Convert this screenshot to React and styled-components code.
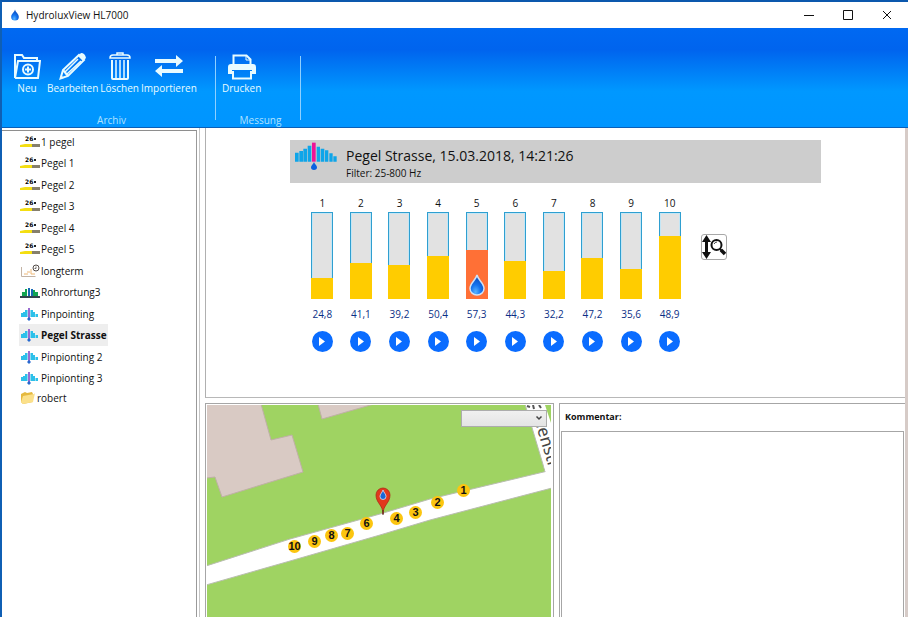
import React from 'react'
import styled, { createGlobalStyle, css } from 'styled-components'

const GlobalStyle = createGlobalStyle`
  *, *::before, *::after {
    box-sizing: border-box;
  }
  body {
    margin: 0;
    font-family: 'Open Sans', 'Noto Sans', sans-serif;
    font-size: 10px;
    color: #111;
    background: #fff;
  }
  button, select, textarea {
    font: inherit;
    color: inherit;
    margin: 0;
  }
`

const Window = styled.div`
  display: flex;
  flex-direction: column;
  min-height: 100vh;
  border-top: 2px solid #0c58ad;
  border-left: 2px solid #0f5fb4;
`

const TitleBar = styled.header`
  display: flex;
  align-items: center;
  height: 26px;
  padding: 0 2px 0 8px;
  background: #fff;
`

const Title = styled.h1`
  flex: 1;
  margin: 0 0 0 6px;
  font-size: 10px;
  font-weight: 400;
`

const WindowButton = styled.button`
  display: flex;
  align-items: center;
  justify-content: center;
  width: 39px;
  height: 24px;
  padding: 0;
  border: 0;
  background: none;
`

const Ribbon = styled.nav`
  display: flex;
  align-items: flex-start;
  height: 100px;
  padding: 24px 0 0 6px;
  color: #e8fbff;
  background: linear-gradient(#0069f2 0%, #0064ee 22%, #0098ff 64%, #0095ff 100%);
  border-bottom: 1px solid #0a5fb8;
`

const RibbonGroup = styled.section`
  display: flex;
  flex-direction: column;
  justify-content: space-between;
  align-items: center;
  height: 75px;
`

const RibbonDivider = styled.span`
  width: 1px;
  height: 64px;
  margin: 4px 5px 0 0;
  background: #8fd0ff;
`

const ToolRow = styled.div`
  display: flex;
  align-self: flex-start;
`

const Tool = styled.button`
  display: flex;
  flex-direction: column;
  align-items: center;
  justify-content: flex-end;
  min-width: 38px;
  height: 43px;
  padding: 0 1px;
  border: 0;
  background: none;
  line-height: 14px;

  svg {
    margin-bottom: 1px;
  }
`

const GroupCaption = styled.h2`
  margin: 0;
  font-size: 10px;
  font-weight: 400;
  line-height: 14px;
  color: #b0e2ff;
`

const ArchiveGroup = styled(RibbonGroup)`
  width: 207px;
`

const PrintGroup = styled(RibbonGroup)`
  width: 79px;
`

const Workspace = styled.div`
  flex: 1;
  display: flex;
  padding-right: 3px;
  background: linear-gradient(to left, #d6cbc7 3px, #fff 3px);
`

const Sidebar = styled.aside`
  width: 198px;
  padding: 2px 2px 0 0;
  border-right: 1px solid #c6c6c6;
`

const Tree = styled.ul`
  height: 100%;
  margin: 0;
  padding: 0 0 0 17px;
  list-style: none;
  border-top: 1px solid #8e8e8e;
  border-right: 1px solid #9a9a9a;
`

const TreeItem = styled.li`
  display: flex;
  height: 21px;

  &:nth-child(even) {
    height: 22px;
  }
  &:last-child {
    height: 18px;
  }
`

const TreeButton = styled.button`
  display: flex;
  align-items: center;
  gap: 1px;
  padding: 0 1px;
  border: 0;
  white-space: nowrap;
  background: ${({ $selected }) => ($selected ? '#eeeeee' : 'none')};
  font-weight: ${({ $selected }) => ($selected ? 700 : 400)};
`

const Content = styled.main`
  flex: 1;
  display: flex;
  flex-direction: column;
  gap: 5px;
  min-width: 0;
  margin-left: 5px;
`

const Measurement = styled.section`
  padding: 12px 84px 45px;
  border-left: 1px solid #b0b0b0;
  border-bottom: 1px solid #b8b8b8;
`

const MeasurementHeader = styled.div`
  display: flex;
  align-items: flex-start;
  gap: 9px;
  height: 43px;
  padding: 2px 5px;
  background: #cdcdcd;
`

const MeasurementTitle = styled.h2`
  margin: 3px 0 0;
  font-size: 14px;
  font-weight: 400;
  line-height: 22px;
`

const FilterInfo = styled.p`
  margin: 0;
  line-height: 13px;
`

const ChartRow = styled.div`
  display: flex;
  align-items: flex-start;
  padding: 12px 0 0 13px;
`

const Chart = styled.div`
  display: grid;
  grid-template-columns: repeat(10, 1fr);
  width: 386px;
`

const Channel = styled.div`
  display: flex;
  flex-direction: column;
  align-items: center;
`

const ChannelNumber = styled.span`
  line-height: 16px;
`

const Bar = styled.div`
  display: flex;
  flex-direction: column;
  justify-content: flex-end;
  width: 22px;
  height: 87px;
  margin-top: 1px;
  background: #e2e2e2;
  box-shadow: inset 0 0 0 1px #2f9fd0, inset 0 0 0 2px #c4e6f5;
`

const BarFill = styled.div`
  display: flex;
  align-items: flex-end;
  justify-content: center;
  padding-bottom: 3px;
  background: ${({ $leak }) => ($leak ? '#ff7036' : '#ffcc00')};
`

const ChannelValue = styled.span`
  margin-top: 7px;
  line-height: 16px;
  color: #0b2f86;
`

const PlayButton = styled.button`
  display: flex;
  align-items: center;
  justify-content: center;
  width: 21px;
  height: 21px;
  margin-top: 9px;
  padding: 0;
  border: 0;
  border-radius: 50%;
  background: #0a6cff;
`

const ScaleButton = styled.button`
  width: 26px;
  height: 26px;
  margin: 39px 0 0 12px;
  padding: 0;
  border: 1px solid #a8a8a8;
  border-radius: 3px;
  background: #fff;

  svg {
    display: block;
  }
`

const Lower = styled.div`
  flex: 1;
  display: flex;
  gap: 5px;
`

const pane = css`
  flex: 1;
  min-width: 0;
  border: 1px solid #a6a6a6;
  border-bottom: 0;
`

const MapPane = styled.section`
  ${pane}
  display: flex;
  padding: 1px 2px 0 1px;
`

const MapCanvas = styled.div`
  position: relative;
  flex: 1;
  overflow: hidden;
  background: #9fd362;

  > svg {
    position: absolute;
    top: 0;
    left: 0;
  }
`

const Marker = styled.button`
  position: absolute;
  left: ${({ $x }) => $x}px;
  top: ${({ $y }) => $y}px;
  display: flex;
  align-items: center;
  justify-content: center;
  width: 13px;
  height: 13px;
  margin: -7px;
  padding: 0;
  border: 0;
  border-radius: 50%;
  background: #fcc50f;
  font: bold 11px/13px 'Liberation Sans', sans-serif;
`

const LayerPicker = styled.div`
  position: absolute;
  top: 5px;
  right: 4px;

  svg {
    position: absolute;
    right: 4px;
    top: 4px;
    pointer-events: none;
  }
`

const LayerSelect = styled.select`
  display: block;
  width: 86px;
  height: 17px;
  appearance: none;
  border: 1px solid #acacac;
  border-radius: 0;
  background: linear-gradient(#f0f0f0, #e4e4e4);
`

const CommentPane = styled.section`
  ${pane}
  display: flex;
  flex-direction: column;
  padding: 0 0 0 1px;
  border-right: 0;
`

const CommentLabel = styled.label`
  padding: 4px 4px 6px;
  line-height: 17px;
  font-size: 9px;
  font-weight: 700;
`

const CommentBox = styled.textarea`
  flex: 1;
  width: auto;
  margin-right: 1px;
  padding: 4px;
  resize: none;
  outline: 0;
  background: #fff;
  border: 1px solid #a6a6a6;
  border-bottom: 0;
`

const Drop = ({ width = 8, height = 11, outline = 'none' }) => (
  <svg width={width} height={height} viewBox="0 0 16 22" aria-hidden="true">
    <defs>
      <radialGradient id="drop" cx="0.4" cy="0.85" r="0.8">
        <stop offset="0" stopColor="#58b4ff" />
        <stop offset="0.45" stopColor="#1373ee" />
        <stop offset="1" stopColor="#0846b8" />
      </radialGradient>
    </defs>
    <path
      d="M8 1C7 6 1 9 1 14.500a7 6.500 0 0 0 14 0C15 9 9 6 8 1z"
      fill="url(#drop)"
      stroke={outline}
      strokeWidth="1.500"
    />
  </svg>
)

const PinpointIcon = ({ width = 18, height = 13 }) => (
  <svg width={width} height={height} viewBox="0 0 126 84" preserveAspectRatio="none" aria-hidden="true">
    <path
      fill="#0ea5e9"
      d="M0 32h11v27H0zM13 27h11v32H13zM25 20h11v39H25zM38 11h11v48H38zM65 14h10v45H65zM77 20h11v39H77zM90 25h10v34H90zM103 34h10v25h-10zM115 43h10v16h-10z"
    />
    <path fill="#ee1297" d="M51 2h11v57H51z" />
    <path fill="#0b62e0" d="M57 60c-2 7-9 10-9 16a9 8 0 0 0 18 0c0-6-7-9-9-16z" />
  </svg>
)

const SmallPinpointIcon = () => (
  <svg width="20" height="14" viewBox="0 0 20 14" aria-hidden="true">
    <path fill="#2cc0ea" d="M1 6h2v4H1zM3 5h2v5H3zM5 3h2v7H5zM11 3h2v7h-2zM13 5h2v5h-2zM16 7h2v3h-2z" />
    <path fill="#8fdcf2" d="M7 3h1v7H7zM10 3h1v7h-1zM15 7h1v3h-1z" />
    <path fill="#9a6bd0" d="M8 1h2v10H8z" />
    <path fill="#2569cf" d="M9 10l2 2-2 2-2-2z" />
  </svg>
)

const LevelIcon = () => (
  <svg width="20" height="12" viewBox="0 0 20 12" aria-hidden="true">
    <text x="5" y="5" fontSize="6" fontWeight="700" fontFamily="DejaVu Sans, sans-serif">26</text>
    <path fill="#222" d="M14 2h2v2h-2z" />
    <path fill="#f4de12" d="M0 9l5-1h8v3H0z" />
    <path fill="#86806c" d="M12 8h8v3h-8z" />
  </svg>
)

const LongtermIcon = () => (
  <svg width="20" height="14" viewBox="0 0 20 14" fill="none" aria-hidden="true">
    <path d="M1.500 3v9.500h14" stroke="#c3b3a4" />
    <path d="M4 10h4M7 8h3M11 5v5h4" stroke="#efb877" />
    <circle cx="16" cy="4" r="3" fill="#fff" stroke="#544c48" />
    <path d="M16 2.500v2h-1.500" stroke="#544c48" strokeWidth="0.800" />
  </svg>
)

const LocateIcon = () => (
  <svg width="20" height="13" viewBox="0 0 20 13" aria-hidden="true">
    <path fill="#12a452" d="M2 6h3v4H2zM5 3h2v7H5zM13 4h2v6h-2zM15 6h3v4h-3z" />
    <path fill="#1769b5" d="M8 2h2v8H8zM11 3h2v7h-2z" />
    <path fill="#33454e" d="M0 10h20v2H0z" />
  </svg>
)

const FolderIcon = () => (
  <svg width="16" height="14" viewBox="0 0 16 14" aria-hidden="true">
    <path fill="#e5b93f" d="M1 3l4-2 2 1 5-1 1 2v8L3 13 1 11z" />
    <path fill="#fbe08a" d="M3 5l11-2 1-1-2 9-10 2-2-2z" />
  </svg>
)

const NewIcon = () => (
  <svg width="28" height="26" viewBox="0 0 28 26" fill="none" stroke="currentColor" strokeWidth="2" aria-hidden="true">
    <path d="M24 6V4H11L9 1H2v23l3-17h22l-2 17H2" />
    <circle cx="15" cy="15.500" r="5" />
    <path d="M15 12.500v6M12 15.500h6" />
  </svg>
)

const EditIcon = () => (
  <svg width="28" height="28" viewBox="0 0 28 28" fill="none" stroke="currentColor" strokeWidth="2" aria-hidden="true">
    <path d="M1.500 26.500L4 18 20 3l5 5L9 24z" />
    <path d="M6 20L19 7M8 22L22 9" strokeWidth="1.500" />
    <path fill="currentColor" d="M19 4l3-3q4 0 5 5l-3 3zM1 27l1-4 3 3z" stroke="none" />
    <path d="M4 18l5 6" />
  </svg>
)

const DeleteIcon = () => (
  <svg width="22" height="28" viewBox="0 0 22 28" fill="none" stroke="currentColor" aria-hidden="true">
    <path d="M1 6q0-3 3-3h14q3 0 3 3zM8 3V1h6v2" strokeWidth="1.500" />
    <path d="M3 8v18q0 1 1 1h14q1 0 1-1V8" strokeWidth="2" />
    <path d="M7 8v18M11 8v18M15 8v18" strokeWidth="1.500" />
  </svg>
)

const ImportIcon = () => (
  <svg width="28" height="28" viewBox="0 0 28 28" fill="currentColor" aria-hidden="true">
    <path d="M0 7h21V3l7 6-7 6v-4H0zM28 17H7v-4l-7 6 7 6v-4h21z" />
  </svg>
)

const PrintIcon = () => (
  <svg width="28" height="26" viewBox="0 0 28 26" aria-hidden="true">
    <path d="M5.500 12V1.500h13l4 4V12" fill="none" stroke="currentColor" strokeWidth="2" />
    <path d="M18 1v5h5" fill="none" stroke="currentColor" />
    <path fill="currentColor" d="M3 10h22q3 0 3 3v7h-4v-4H4v4H0v-7q0-3 3-3z" />
    <path d="M5 17v7.500h18V17" fill="none" stroke="currentColor" strokeWidth="2" />
  </svg>
)

const ScaleIcon = () => (
  <svg width="24" height="24" viewBox="0 0 24 24" fill="none" stroke="#111" aria-hidden="true">
    <path d="M4.500 5v14" strokeWidth="3" />
    <path d="M4.500 0L9 7H0zM4.500 24L9 17H0z" fill="#111" stroke="none" />
    <circle cx="14.500" cy="10" r="5" strokeWidth="2" />
    <path d="M18 14l1.500 1.500" strokeWidth="2" />
    <path d="M19 15l4 4" strokeWidth="3.500" />
    <path d="M12 9q1-2 3-2" strokeWidth="0.800" />
  </svg>
)

const treeIcons = {
  level: LevelIcon,
  longterm: LongtermIcon,
  locate: LocateIcon,
  pinpoint: SmallPinpointIcon,
  folder: FolderIcon,
}

const archive = [
  { name: '1 pegel', icon: 'level' },
  { name: 'Pegel 1', icon: 'level' },
  { name: 'Pegel 2', icon: 'level' },
  { name: 'Pegel 3', icon: 'level' },
  { name: 'Pegel 4', icon: 'level' },
  { name: 'Pegel 5', icon: 'level' },
  { name: 'longterm', icon: 'longterm' },
  { name: 'Rohrortung3', icon: 'locate' },
  { name: 'Pinpointing', icon: 'pinpoint' },
  { name: 'Pegel Strasse', icon: 'pinpoint', selected: true },
  { name: 'Pinpionting 2', icon: 'pinpoint' },
  { name: 'Pinpionting 3', icon: 'pinpoint' },
  { name: 'robert', icon: 'folder' },
]

const archiveTools = [
  { label: 'Neu', Icon: NewIcon },
  { label: 'Bearbeiten', Icon: EditIcon },
  { label: 'Löschen', Icon: DeleteIcon },
  { label: 'Importieren', Icon: ImportIcon },
]

const channels = [
  { value: '24,8', level: 21 },
  { value: '41,1', level: 36 },
  { value: '39,2', level: 34 },
  { value: '50,4', level: 43 },
  { value: '57,3', level: 49, leak: true },
  { value: '44,3', level: 38 },
  { value: '32,2', level: 28 },
  { value: '47,2', level: 41 },
  { value: '35,6', level: 30 },
  { value: '48,9', level: 63 },
]

const markers = [
  { id: 1, x: 257, y: 86 },
  { id: 2, x: 231, y: 98 },
  { id: 3, x: 209, y: 108 },
  { id: 4, x: 190, y: 114 },
  { id: 6, x: 160, y: 119 },
  { id: 7, x: 141, y: 129 },
  { id: 8, x: 125, y: 131 },
  { id: 9, x: 108, y: 137 },
  { id: 10, x: 88, y: 142 },
]

const StreetMap = () => (
  <svg width="344" height="212" viewBox="0 0 344 212" aria-hidden="true">
    <g fill="#d9cac4" stroke="#bfb0a6">
      <path d="M-1-1h55l10 36 21-5 11 37-81 25-7-20-9 1z" />
      <path d="M111-1l4 15 52-15z" />
    </g>
    <path fill="#fff" stroke="#b9bdb0" d="M318-1l22 74h6V-1z" />
    <path fill="#9fd362" d="M338 0h6v18z" />
    <path
      fill="#fff"
      stroke="#b9bdb0"
      d="M-1 161L83 134l90-25 50-15 122-29v18L223 115l-50 15-90 26L-1 180z"
    />
    <path fill="#fff" d="M337 60h8v14l-5-1z" />
    <path stroke="#555" strokeWidth="2" d="M320 1l3 1M326 0l1 4M332 0l2 3" />
    <text x="327" y="14" fontSize="17" fill="#444" fontFamily="Noto Sans, sans-serif" transform="rotate(73 327 14)">
      nenstr
    </text>
  </svg>
)

const Pin = () => (
  <svg width="344" height="212" viewBox="0 0 344 212" aria-hidden="true">
    <path fill="#e2381d" stroke="#ad2b16" strokeWidth="0.800" d="M176 109c0-9-7-11-7-19a7 7 0 0 1 14 0c0 8-7 10-7 19z" />
    <path fill="#1767d8" stroke="#d8e6f6" strokeWidth="0.800" d="M176 85c-1 3-3 4-3 6.500a3 3 0 0 0 6 0c0-2.500-2-3.500-3-6.500z" />
    <path stroke="#4a2116" d="M176 105v5" />
  </svg>
)

const App = () => (
  <>
    <GlobalStyle />
    <Window>
      <TitleBar>
        <Drop width={10} height={12} />
        <Title>HydroluxView HL7000</Title>
        <WindowButton aria-label="Minimieren">
          <svg width="10" height="10" stroke="#111"><path d="M0 5.500h10" /></svg>
        </WindowButton>
        <WindowButton aria-label="Maximieren">
          <svg width="10" height="10" fill="none" stroke="#111"><path d="M.5.5h9v9h-9z" /></svg>
        </WindowButton>
        <WindowButton aria-label="Schließen">
          <svg width="10" height="10" stroke="#111"><path d="M1 1l8 8M9 1L1 9" /></svg>
        </WindowButton>
      </TitleBar>

      <Ribbon>
        <ArchiveGroup>
          <ToolRow>
            {archiveTools.map(({ label, Icon }) => (
              <Tool key={label}>
                <Icon />
                {label}
              </Tool>
            ))}
          </ToolRow>
          <GroupCaption>Archiv</GroupCaption>
        </ArchiveGroup>
        <RibbonDivider />
        <PrintGroup>
          <ToolRow>
            <Tool>
              <PrintIcon />
              Drucken
            </Tool>
          </ToolRow>
          <GroupCaption>Messung</GroupCaption>
        </PrintGroup>
        <RibbonDivider />
      </Ribbon>

      <Workspace>
        <Sidebar>
          <Tree>
            {archive.map(({ name, icon, selected }) => {
              const Icon = treeIcons[icon]
              return (
                <TreeItem key={name}>
                  <TreeButton $selected={selected}>
                    <Icon />
                    {name}
                  </TreeButton>
                </TreeItem>
              )
            })}
          </Tree>
        </Sidebar>

        <Content>
          <Measurement>
            <MeasurementHeader>
              <PinpointIcon width={42} height={28} />
              <div>
                <MeasurementTitle>Pegel Strasse, 15.03.2018, 14:21:26</MeasurementTitle>
                <FilterInfo>Filter: 25-800 Hz</FilterInfo>
              </div>
            </MeasurementHeader>
            <ChartRow>
              <Chart>
                {channels.map(({ value, level, leak }, i) => (
                  <Channel key={value}>
                    <ChannelNumber>{i + 1}</ChannelNumber>
                    <Bar>
                      <BarFill $leak={leak} style={{ height: level }}>
                        {leak && <Drop width={16} height={22} outline="#cfe2f5" />}
                      </BarFill>
                    </Bar>
                    <ChannelValue>{value}</ChannelValue>
                    <PlayButton aria-label={`Messung ${i + 1} abspielen`}>
                      <svg width="6" height="9" fill="#fff"><path d="M0 0l6 4.500L0 9z" /></svg>
                    </PlayButton>
                  </Channel>
                ))}
              </Chart>
              <ScaleButton aria-label="Skalierung">
                <ScaleIcon />
              </ScaleButton>
            </ChartRow>
          </Measurement>

          <Lower>
            <MapPane>
              <MapCanvas>
                <StreetMap />
                {markers.map(({ id, x, y }) => (
                  <Marker key={id} $x={x} $y={y}>{id}</Marker>
                ))}
                <Pin />
                <LayerPicker>
                  <LayerSelect aria-label="Kartenansicht" />
                  <svg width="8" height="8" fill="none" stroke="#444" strokeWidth="1.500">
                    <path d="M1.500 2.500L4 5l2.500-2.500" />
                  </svg>
                </LayerPicker>
              </MapCanvas>
            </MapPane>
            <CommentPane>
              <CommentLabel htmlFor="comment">Kommentar:</CommentLabel>
              <CommentBox id="comment" />
            </CommentPane>
          </Lower>
        </Content>
      </Workspace>
    </Window>
  </>
)

export default App
